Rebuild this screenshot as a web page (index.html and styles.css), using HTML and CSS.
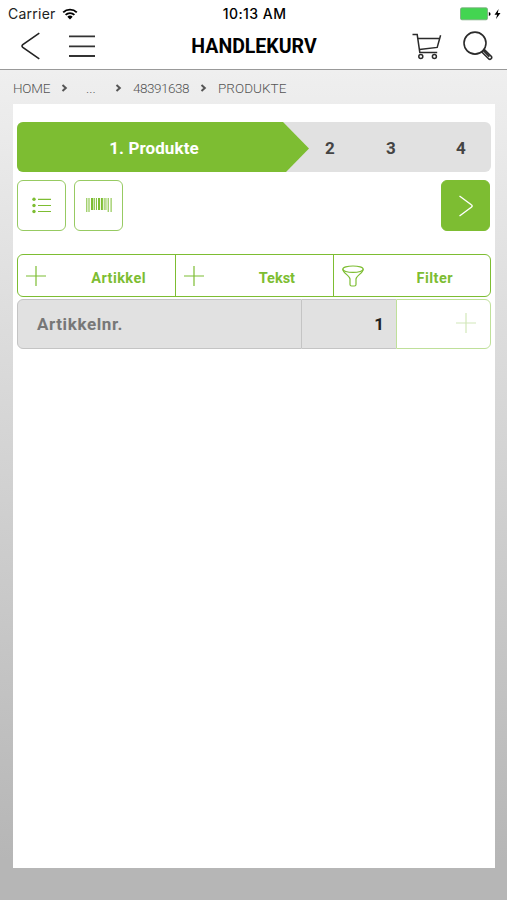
FILE: index.html
```html
<!DOCTYPE html>
<html lang="no">
<head>
  <meta charset="UTF-8" />
  <meta name="viewport" content="width=device-width, initial-scale=1" />
  <title>Handlekurv</title>
  <link rel="stylesheet" href="styles.css">
</head>
<body>
  <header class="header">
    <div class="status-bar">
      <div class="carrier">
        <span class="carrier-name">Carrier</span>
        <svg class="wifi" width="16" height="12" viewBox="0 0 16 12">
          <path d="M1.2 4.4a9.8 9.8 0 0 1 13.6 0M3.6 6.9a6.3 6.3 0 0 1 8.8 0" fill="none" stroke="#000" stroke-width="1.9"/>
          <path d="M8 11.5L5.3 8.8a3.8 3.8 0 0 1 5.4 0z"/>
        </svg>
      </div>
      <span class="time">10:13 AM</span>
      <div class="battery">
        <svg width="42" height="14" viewBox="0 0 42 14">
          <rect x=".5" y=".8" width="27" height="12" rx="1.5" fill="#43d551" stroke="#79a77c" stroke-width=".8"/>
          <path d="M28.8 5v4q1.8-.5 1.8-2t-1.8-2z"/>
          <path d="M38.6 2l-4.1 5.8h2.6L36 12l4.5-6h-2.7z"/>
        </svg>
      </div>
    </div>
    <nav class="nav">
      <div class="nav-left">
        <a href="#" class="back" aria-label="Tilbake">
          <svg width="20" height="28" viewBox="0 0 20 28"><path d="M19.3 1.2L2.8 12.6Q1.2 14 2.8 15.4L19.3 26.8" fill="none" stroke="#222" stroke-width="1.6"/></svg>
        </a>
        <a href="#" class="menu" aria-label="Meny">
          <svg width="28" height="24" viewBox="0 0 28 24"><path d="M1 2.4h26M1 12.4h26M1 22h26" stroke="#333" stroke-width="1.8"/></svg>
        </a>
      </div>
      <h1 class="title">HANDLEKURV</h1>
      <div class="nav-right">
        <a href="#" aria-label="Handlekurv">
          <svg width="30" height="28" viewBox="0 0 30 28" fill="none" stroke="#2b2b2b" stroke-width="1.5">
            <path d="M.5 2.6h4.7l2.6 17.8h17.4"/>
            <path d="M6 6.4h21.3M28.6 3.2l-3.4 12.2L7.4 17.6"/>
            <circle cx="8.8" cy="24.6" r="2"/>
            <circle cx="22.4" cy="24.6" r="2"/>
          </svg>
        </a>
        <a href="#" class="search" aria-label="Søk">
          <svg width="30" height="30" viewBox="0 0 30 30" fill="none" stroke="#2b2b2b" stroke-width="1.6">
            <circle cx="12" cy="12.1" r="11"/>
            <path d="M18.6 20.7l7.2 7.3q1.2.8 2.3-.3t.3-2.3l-7.3-7.1M20 19.3l6.3 6.5"/>
          </svg>
        </a>
      </div>
    </nav>
  </header>

  <div class="breadcrumb">
    <a href="#" class="home">HOME</a>
    <svg class="sep" width="7" height="8" viewBox="0 0 7 8"><path d="M1.5 1l3.3 3-3.3 3"/></svg>
    <a href="#" class="dots">...</a>
    <svg class="sep" width="7" height="8" viewBox="0 0 7 8"><path d="M1.5 1l3.3 3-3.3 3"/></svg>
    <a href="#" class="number">48391638</a>
    <svg class="sep" width="7" height="8" viewBox="0 0 7 8"><path d="M1.5 1l3.3 3-3.3 3"/></svg>
    <span class="current">PRODUKTE</span>
  </div>

  <main class="content">
    <div class="steps">
      <div class="step active">1. Produkte</div>
      <div class="step">2</div>
      <div class="step">3</div>
      <div class="step">4</div>
    </div>

    <div class="actions">
      <button class="btn" aria-label="Liste">
        <svg width="20" height="17" viewBox="0 0 20 17" fill="#7dbd32">
          <circle cx="2" cy="2.3" r="1.7"/><circle cx="2" cy="8.5" r="1.7"/><circle cx="2" cy="14.5" r="1.7"/>
          <path d="M6 2.3h13M6 8.5h13M6 14.5h13" stroke="#7dbd32" stroke-width="1.2"/>
        </svg>
      </button>
      <button class="btn" aria-label="Strekkode">
        <svg class="barcode" width="26" height="16" viewBox="0 0 26 16" fill="#7dbd32">
          <path d="M.3 1h1v14h-1zM2.5 1h1v14h-1zM5 1h2.4v12H5zM8.2 1h.9v12h-.9zM10 1h.9v12H10zM12 1h2v12h-2zM14.9 1h2v12h-2zM17.8 1h.8v12h-.8zM19.5 1h.9v12h-.9zM21.7 1h1v14h-1zM24.6 1h1v14h-1z"/>
        </svg>
      </button>
      <button class="btn next" aria-label="Neste">
        <svg width="16" height="22" viewBox="0 0 16 22"><path d="M1.5 1L13.3 9.8Q15 11 13.3 12.2L1.5 21" fill="none" stroke="#fff" stroke-width="1.4"/></svg>
      </button>
    </div>

    <div class="toolbar">
      <button class="tool">
        <svg class="plus" width="20" height="20" viewBox="0 0 20 20"><path d="M10 0v20M0 10h20"/></svg>
        <span class="wide">Artikkel</span>
      </button>
      <button class="tool tool-text">
        <svg class="plus" width="20" height="20" viewBox="0 0 20 20"><path d="M10 0v20M0 10h20"/></svg>
        <span>Tekst</span>
      </button>
      <button class="tool tool-filter">
        <svg class="funnel" width="22" height="22" viewBox="0 0 22 22">
          <ellipse cx="11" cy="4.2" rx="10.2" ry="3.2"/>
          <path d="M.8 4.2C1 8.5 8 10.6 8 14v5.5q0 1.5 1.6 1.5h2.8q1.6 0 1.6-1.5V14c0-3.4 7-5.5 7.2-9.8"/>
        </svg>
        <span class="wide">Filter</span>
      </button>
    </div>

    <div class="article-row">
      <div class="article">Artikkelnr.</div>
      <div class="quantity">1</div>
      <button class="add" aria-label="Legg til">
        <svg class="plus" width="20" height="20" viewBox="0 0 20 20"><path d="M10 0v20M0 10h20"/></svg>
      </button>
    </div>
  </main>
</body>
</html>
```

FILE: styles.css
```css
* {
  box-sizing: border-box;
}

body {
  margin: 0;
  height: 900px;
  display: flex;
  flex-direction: column;
  font-family: Roboto, 'Liberation Sans', sans-serif;
  background: linear-gradient(#efefef 70px, #b6b6b6 860px);
  overflow: hidden;
}

a {
  color: inherit;
  text-decoration: none;
}

svg {
  display: block;
  flex: none;
}

button {
  font-family: inherit;
  padding: 0;
  cursor: pointer;
}

.header {
  height: 70px;
  background: #fff;
  border-bottom: 1px solid #999;
}

.status-bar {
  display: grid;
  grid-template-columns: 1fr auto 1fr;
  align-items: center;
  height: 24px;
  padding: 3px 5px 0 8px;
  font-family: Inter, sans-serif;
  font-size: 14px;
  line-height: 20px;
}

.carrier {
  display: flex;
  align-items: center;
  gap: 6px;
}

.carrier-name {
  color: #222;
  letter-spacing: 0.25px;
}

.time {
  margin-right: 1px;
  font-weight: 500;
  font-size: 14px;
  letter-spacing: 0.45px;
}

.battery {
  display: flex;
  justify-content: flex-end;
}

.nav {
  display: grid;
  grid-template-columns: 1fr auto 1fr;
  align-items: center;
  height: 44px;
  padding: 0 14px 0 20px;
}

.nav-left,
.nav-right {
  display: flex;
  align-items: center;
}

.nav-left {
  gap: 28px;
}

.nav-right {
  justify-content: flex-end;
  gap: 21px;
}

.title {
  margin: 2px 5px 0 0;
  font-size: 19.5px;
  line-height: 24px;
  font-weight: 700;
}

.breadcrumb {
  display: grid;
  grid-template-columns: 48px 25px 29px 18px 67px 18px auto;
  align-items: center;
  height: 34px;
  padding: 2px 0 0 13px;
  color: #555;
  font-size: 13.5px;
  font-weight: 300;
}

.home {
  letter-spacing: -0.2px;
}

.number {
  letter-spacing: -0.5px;
}

.current {
  letter-spacing: 0.05px;
}

.sep {
  fill: none;
  stroke: #555;
  stroke-width: 2;
}

.content {
  width: 482px;
  height: 764px;
  margin-left: 13px;
  padding: 18px 4px 0;
  background: #fff;
}

.steps {
  display: grid;
  grid-template-columns: 292px 42px 80px 60px;
  height: 50px;
  border-radius: 6px;
  background: #e1e1e1;
  overflow: hidden;
}

.step {
  display: flex;
  align-items: center;
  justify-content: center;
  padding-top: 1px;
  color: #444;
  font-size: 17px;
  font-weight: 700;
}

.step.active {
  padding-right: 18px;
  color: #fff;
  background: #7dbd32;
  letter-spacing: 0.1px;
  clip-path: polygon(0 0, 266px 0, 100% 53%, 269px 100%, 0 100%);
}

.actions {
  display: flex;
  gap: 8px;
  margin-top: 8px;
}

.btn {
  display: flex;
  align-items: center;
  justify-content: center;
  width: 49px;
  height: 51px;
  border: 1.5px solid #97ca62;
  border-radius: 6px;
  background: #fff;
}

.barcode {
  margin-bottom: 2px;
}

.next {
  margin: 0 1px 0 auto;
  border-color: #7dbd32;
  background: #7dbd32;
}

.toolbar {
  display: grid;
  grid-template-columns: 158px 158px 1fr;
  height: 43px;
  margin-top: 23px;
  border: 1px solid #7dbd32;
  border-radius: 6px;
}

.tool {
  display: flex;
  align-items: center;
  justify-content: space-between;
  padding: 1px 29px 0 8px;
  border: 0;
  border-right: 1px solid #7dbd32;
  background: none;
  color: #7dbd32;
  font-size: 14.5px;
  font-weight: 700;
}

.tool span {
  padding-top: 4px;
}

.tool .wide {
  letter-spacing: 0.45px;
}

.tool-text {
  padding-right: 38px;
}

.tool-filter {
  padding-right: 37px;
  border-right: 0;
}

.plus,
.funnel {
  fill: none;
  stroke: #7dbd32;
  stroke-width: 1.2;
}

.article-row {
  display: grid;
  grid-template-columns: 285px 94px 95px;
  height: 50px;
  margin-top: 2px;
}

.article,
.quantity {
  display: flex;
  align-items: center;
  border: 1px solid #c4c4c4;
  background: #e1e1e1;
  font-size: 17px;
  font-weight: 700;
}

.article {
  padding-left: 19px;
  border-radius: 6px 0 0 6px;
  color: #777;
  letter-spacing: 0.6px;
}

.quantity {
  justify-content: flex-end;
  padding-right: 12px;
  border-left: 0;
  border-right: 0;
  color: #222;
}

.add {
  display: flex;
  align-items: center;
  justify-content: flex-end;
  padding: 0 14px 3px 0;
  border: 1px solid #bfe09a;
  border-radius: 0 6px 6px 0;
  background: #fff;
}

.add .plus {
  stroke: #d2e8b9;
}
```
